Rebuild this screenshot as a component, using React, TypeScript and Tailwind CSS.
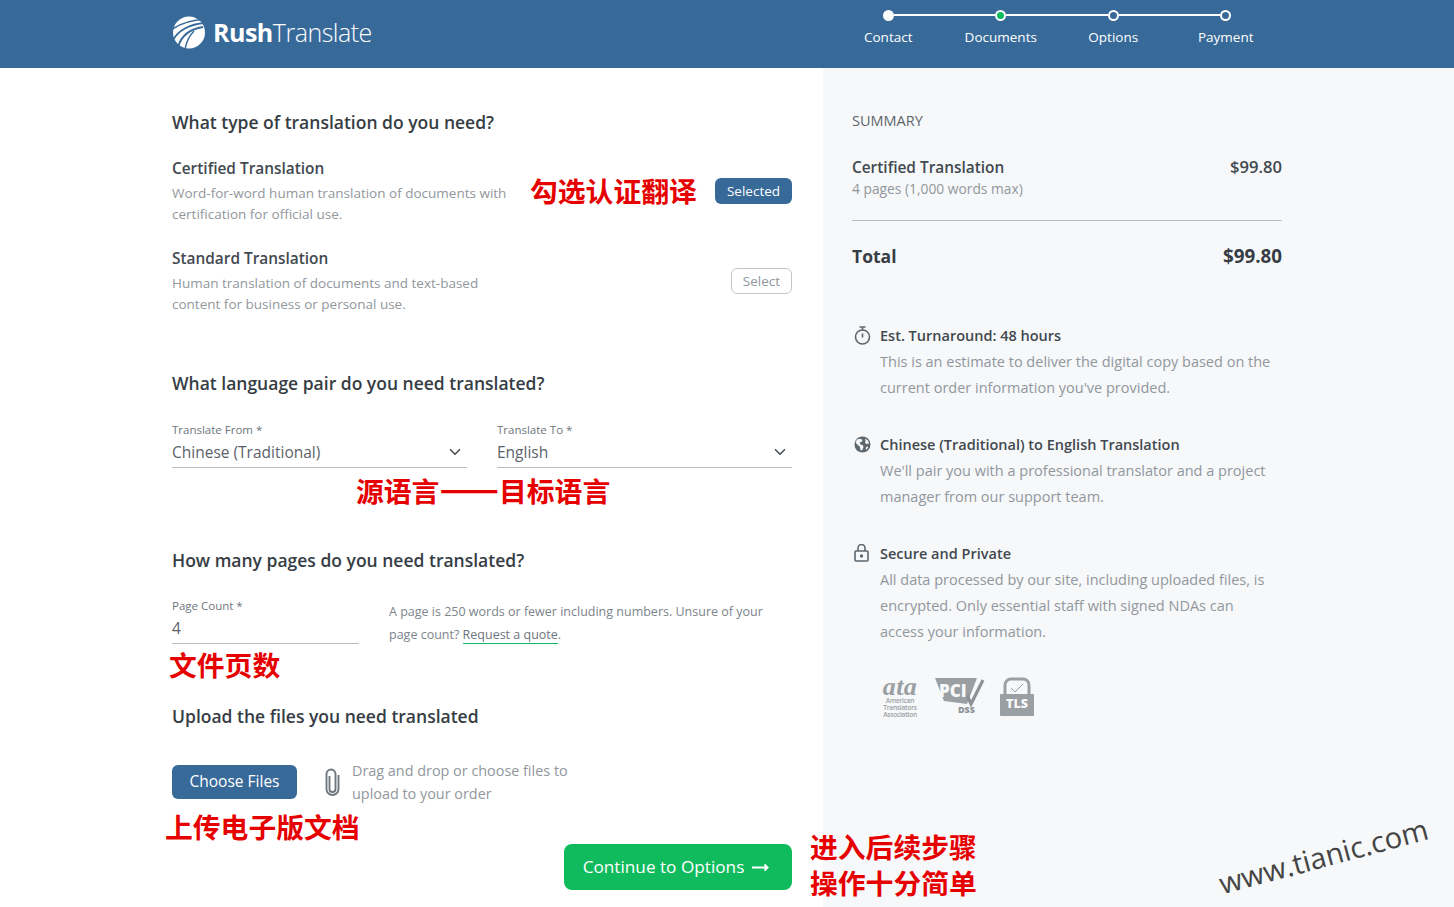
import { ChevronDown } from 'lucide-react'

const steps = ['Contact', 'Documents', 'Options', 'Payment']

function Logo() {
  return (
    <div className="flex items-center mb-[4px]">
      <svg width="34" height="33" viewBox="0 0 34 33" fill="none">
        <circle cx="17" cy="16.5" r="16" fill="#ffffff" />
        <path d="M-1 14C7 8 18 4 34 3" stroke="#386a99" strokeWidth="1.6" />
        <path d="M1 24C6 15 17 8 33 7" stroke="#386a99" strokeWidth="1.8" />
        <path d="M6 31C9 21 17 13 31 11" stroke="#386a99" strokeWidth="2" />
        <path d="M13 34C14 27 17 20 22 15" stroke="#386a99" strokeWidth="1.4" />
      </svg>
      <div className="ml-[7px] text-[25px] leading-[30px] text-white tracking-[-0.5px]">
        <span className="font-bold">Rush</span>
        <span className="font-light">Translate</span>
      </div>
    </div>
  )
}

function Stepper() {
  return (
    <div className="grid grid-cols-4 w-[450px] mb-[12px]">
      {steps.map((step, i) => (
        <div key={step} className="flex flex-col items-center">
          <div className="flex items-center w-full h-[12px]">
            <div className={i === 0 ? 'flex-1 h-[2px]' : 'flex-1 h-[2px] bg-white'} />
            <div
              className={
                i === 0
                  ? 'w-[11px] h-[11px] rounded-full bg-white'
                  : i === 1
                    ? 'w-[11px] h-[11px] rounded-full bg-[#0fbb5c] border-2 border-white'
                    : 'w-[11px] h-[11px] rounded-full bg-[#386a99] border-2 border-white'
              }
            />
            <div className={i === 3 ? 'flex-1 h-[2px]' : 'flex-1 h-[2px] bg-white'} />
          </div>
          <div className="mt-[6px] text-[13.5px] leading-[20px] text-white">{step}</div>
        </div>
      ))}
    </div>
  )
}

function Heading({ children }: { children: string }) {
  return <h2 className="pb-[2px] text-[17.5px] leading-[22px] font-semibold text-[#363d44]">{children}</h2>
}

function TypeOption({ title, lines, selected }: { title: string; lines: string[]; selected?: boolean }) {
  return (
    <div className="flex items-center justify-between">
      <div>
        <div className="text-[15.4px] leading-[24px] font-semibold text-[#42494f]">{title}</div>
        <div className="mt-[2px] text-[13.5px] leading-[21px] text-[#91979d]">
          {lines.map((l) => (
            <div key={l}>{l}</div>
          ))}
        </div>
      </div>
      {selected ? (
        <button className="w-[77px] h-[26px] rounded-md bg-[#386a99] text-[13.5px] text-white">Selected</button>
      ) : (
        <button className="w-[61px] h-[26px] rounded-md border border-[#c2c6ca] text-[13.5px] text-[#91979d]">Select</button>
      )}
    </div>
  )
}

function LangSelect({ label, value }: { label: string; value: string }) {
  return (
    <div className="border-b border-[#b9bec3] h-[46px]">
      <div className="text-[11.5px] leading-[16px] text-[#6d757c]">{label}</div>
      <div className="flex items-center justify-between pr-[3px] mt-[2px]">
        <span className="text-[15.5px] leading-[24px] text-[#5b636a]">{value}</span>
        <ChevronDown className="w-[18px] h-[18px] text-[#4a5157]" strokeWidth={2.2} />
      </div>
    </div>
  )
}

function InfoBlock({ icon, title, lines }: { icon: React.ReactNode; title: string; lines: string[] }) {
  return (
    <div className="flex">
      <div className="w-[28px] shrink-0 pl-[2px] pt-[3px]">{icon}</div>
      <div>
        <div className="text-[14.5px] leading-[26px] font-semibold text-[#42494f]">{title}</div>
        <div className="text-[14.5px] leading-[26px] text-[#91979d]">
          {lines.map((l) => (
            <div key={l}>{l}</div>
          ))}
        </div>
      </div>
    </div>
  )
}

const TimerIcon = (
  <svg width="17" height="19" viewBox="0 0 17 19" fill="none" stroke="#5f676e" strokeWidth="1.6">
    <circle cx="8.5" cy="11" r="7" />
    <path d="M5.5 1h6M8.5 1v3M8.5 7.5v4" />
  </svg>
)

const GlobeIcon = (
  <svg width="17" height="17" viewBox="0 0 17 17" className="mt-[1px]">
    <circle cx="8.5" cy="8.5" r="8" fill="#5f676e" />
    <path d="M3 3.5l3-.8 2.5 1-.7 2-2 .6.5 2.2 2.6.7.6 2.4-1.6 2.8-1.5-.6-.6-3.2L2.6 8 1.8 6zM11 2.5l3 2 1 3-2.4.6-1.6-1.4.6-1.6zM12.5 10.5l1.8.4-1.6 2.8-1-.8z" fill="#f6f8fa" />
  </svg>
)

const LockIcon = (
  <svg width="15" height="18" viewBox="0 0 15 18" fill="none" stroke="#5f676e" strokeWidth="1.6">
    <rect x="1" y="7" width="13" height="10" rx="1" />
    <path d="M4 7V4a3.5 3.5 0 0 1 7 0v3" />
    <circle cx="7.5" cy="12" r="0.9" fill="#5f676e" />
  </svg>
)

function Badges() {
  return (
    <div className="flex items-start gap-[15px] ml-[28px] mt-[32px]">
      <div className="w-[40px] flex flex-col items-center text-[#9a9fa4]">
        <div className="font-['Liberation_Serif',serif] italic font-bold text-[26px] leading-[20px] tracking-[0.5px]">ata</div>
        <div className="text-[6.5px] leading-[7px] text-center tracking-[-0.2px] font-semibold whitespace-nowrap">
          American
          <br />
          Translators
          <br />
          Association
        </div>
      </div>
      <svg width="50" height="40" viewBox="0 0 50 40" fill="none">
        <path d="M0 1h42l-10 26-23-3z" fill="#9a9fa4" />
        <text x="4" y="20" fontSize="17" fontWeight="800" fill="#f6f8fa" fontFamily="Open Sans, sans-serif">PCI</text>
        <path d="M32 18l4 9 12-24" stroke="#8d9297" strokeWidth="3.2" />
        <text x="23" y="36" fontSize="9" fontWeight="800" fill="#8d9297" fontFamily="Open Sans, sans-serif">DSS</text>
      </svg>
      <svg width="36" height="40" viewBox="0 0 36 40" fill="none" className="-ml-[1px]">
        <path d="M6 17V8a6 6 0 0 1 6-6h12a6 6 0 0 1 6 6v9" stroke="#9a9fa4" strokeWidth="3" />
        <path d="M12 11l4 4 8-8" stroke="#9a9fa4" strokeWidth="1" />
        <rect x="1" y="17" width="34" height="22" rx="1" fill="#9a9fa4" />
        <text x="18" y="31" textAnchor="middle" fontSize="12.5" fontWeight="800" fill="#f6f8fa" fontFamily="Open Sans, sans-serif">TLS</text>
      </svg>
    </div>
  )
}

// red notes and the watermark sit on top of the page
const noteClass = "absolute font-['Noto_Sans_CJK_SC',sans-serif] font-bold text-[27.8px] text-[#e60000] whitespace-nowrap"

export default function App() {
  return (
    <div className="relative h-[907px] overflow-hidden flex flex-col bg-white font-['Open_Sans',sans-serif]">
      <header className="h-[68px] shrink-0 bg-[#386a99] flex items-center justify-between pl-[172px] pr-[3px]">
        <Logo />
        <div className="pr-[169px]">
          <Stepper />
        </div>
      </header>

      <main className="flex-1 flex min-h-0">
        <section className="w-[823px] shrink-0 pl-[172px] pr-[31px] pt-[43px]">
          <Heading>What type of translation do you need?</Heading>
          <div className="mt-[22px] flex flex-col gap-[22px]">
            <TypeOption
              title="Certified Translation"
              lines={['Word-for-word human translation of documents with', 'certification for official use.']}
              selected
            />
            <TypeOption
              title="Standard Translation"
              lines={['Human translation of documents and text-based', 'content for business or personal use.']}
            />
          </div>

          <div className="mt-[57px]">
            <Heading>What language pair do you need translated?</Heading>
          </div>
          <div className="mt-[26px] grid grid-cols-2 gap-[30px]">
            <LangSelect label="Translate From *" value="Chinese (Traditional)" />
            <LangSelect label="Translate To *" value="English" />
          </div>

          <div className="mt-[81px]">
            <Heading>How many pages do you need translated?</Heading>
          </div>
          <div className="mt-[25px] flex">
            <div className="w-[187px] h-[46px] border-b border-[#b9bec3]">
              <div className="text-[11.5px] leading-[16px] text-[#6d757c]">Page Count *</div>
              <div className="mt-[2px] text-[15.5px] leading-[24px] text-[#5b636a]">4</div>
            </div>
            <p className="ml-[30px] mt-[2px] text-[12.5px] leading-[23px] text-[#7c848b]">
              A page is 250 words or fewer including numbers. Unsure of your
              <br />
              page count? <span className="border-b border-[#0fbb5c] text-[#6d757c]">Request a quote</span>.
            </p>
          </div>

          <div className="mt-[59px]">
            <Heading>Upload the files you need translated</Heading>
          </div>
          <div className="mt-[30px] flex items-center">
            <button className="w-[125px] h-[34px] rounded-md bg-[#386a99] text-[15.5px] text-white">Choose Files</button>
            <svg width="17" height="29" viewBox="0 0 17 29" fill="none" stroke="#6f777e" strokeWidth="1.9" className="ml-[27px]">
              <path d="M5.5 8v13a3 3 0 0 0 6 0V6a4.5 4.5 0 0 0-9 0v15a6 6 0 0 0 12 0V7" />
            </svg>
            <p className="ml-[11px] text-[14.4px] leading-[23px] text-[#91979d]">
              Drag and drop or choose files to
              <br />
              upload to your order
            </p>
          </div>
          <div className="mt-[39px] flex justify-end">
            <button className="w-[228px] h-[46px] pr-[4px] rounded-lg bg-[#0fbb5c] flex items-center justify-center gap-[8px] text-[17.2px] text-white">
              Continue to Options
              <svg width="17" height="10" viewBox="0 0 17 10" fill="none" stroke="#ffffff" strokeWidth="2">
                <path d="M0 5.5h15.5M12.5 2.5l3 3-3 3" />
              </svg>
            </button>
          </div>
        </section>

        <aside className="flex-1 bg-[#f6f8fa] pl-[29px] pr-[172px] pt-[43px]">
          <div className="text-[14.5px] leading-[20px] font-medium text-[#5e666d]">SUMMARY</div>
          <div className="mt-[25px] flex justify-between">
            <div>
              <div className="text-[15.4px] leading-[23px] font-semibold text-[#42494f]">Certified Translation</div>
              <div className="-mt-[1px] text-[13.8px] leading-[21px] text-[#91979d]">4 pages (1,000 words max)</div>
            </div>
            <div className="text-[16.6px] leading-[22px] font-semibold text-[#42494f]">$99.80</div>
          </div>
          <div className="mt-[21px] h-px bg-[#b9bec3]" />
          <div className="mt-[23px] flex justify-between items-center text-[17.5px] leading-[24px] font-bold text-[#363d44]">
            <span>Total</span>
            <span className="text-[18.8px]">$99.80</span>
          </div>
          <div className="mt-[55px] flex flex-col gap-[31px]">
            <InfoBlock
              icon={TimerIcon}
              title="Est. Turnaround: 48 hours"
              lines={['This is an estimate to deliver the digital copy based on the', "current order information you've provided."]}
            />
            <InfoBlock
              icon={GlobeIcon}
              title="Chinese (Traditional) to English Translation"
              lines={["We'll pair you with a professional translator and a project", 'manager from our support team.']}
            />
            <InfoBlock
              icon={LockIcon}
              title="Secure and Private"
              lines={[
                'All data processed by our site, including uploaded files, is',
                'encrypted. Only essential staff with signed NDAs can',
                'access your information.',
              ]}
            />
          </div>
          <Badges />
        </aside>
      </main>

      <span className={`${noteClass} leading-[32px] left-[530px] top-[174px]`}>勾选认证翻译</span>
      <span className={`${noteClass} leading-[32px] left-[356px] top-[469px]`}>
        源语言<span className="text-[35px] leading-none">——</span>目标语言
      </span>
      <span className={`${noteClass} leading-[32px] left-[169px] top-[648px]`}>文件页数</span>
      <span className={`${noteClass} leading-[32px] left-[165px] top-[810px]`}>上传电子版文档</span>
      <span className={`${noteClass} leading-[36px] left-[810px] top-[828px]`}>
        进入后续步骤
        <br />
        操作十分简单
      </span>
      <span className="absolute left-[1216px] top-[836px] -rotate-[15deg] text-[29.2px] leading-[40px] text-[#444444] whitespace-nowrap">
        www.tianic.com
      </span>
    </div>
  )
}
